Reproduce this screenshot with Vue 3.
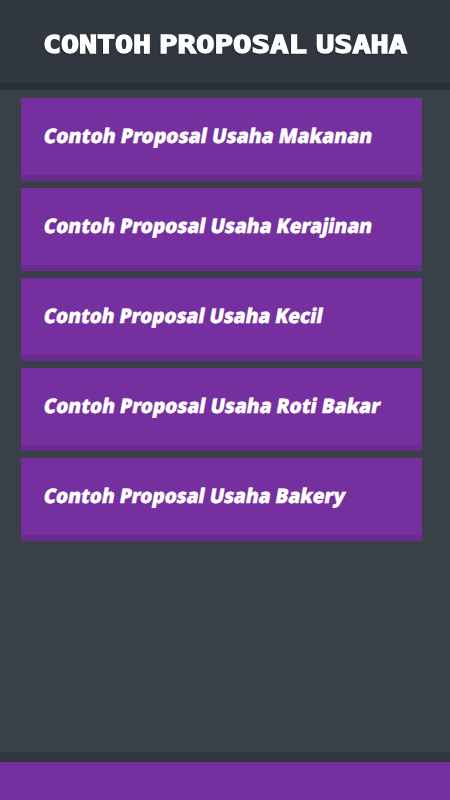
<template>
    <div class="screen">
        <header class="header">
            <svg class="title" width="450" height="83" viewBox="0 0 450 83">
                <text v-for="word in titleWords" :key="word.text" :x="word.x" y="53" :textLength="word.width"
                    lengthAdjust="spacingAndGlyphs">{{ word.text }}</text>
            </svg>
        </header>
        <main class="list">
            <div v-for="item in items" :key="item.text" class="card">
                <svg class="label" width="360" height="32" viewBox="0 0 360 32">
                    <text x="0" y="21.5" transform="translate(3.5 0) skewX(-10)" :textLength="item.width"
                        lengthAdjust="spacingAndGlyphs">{{ item.text }}</text>
                </svg>
            </div>
        </main>
        <footer class="footer"></footer>
    </div>
</template>

<script setup>
const titleWords = [
    { text: "CONTOH", x: 43, width: 108 },
    { text: "PROPOSAL", x: 159, width: 148 },
    { text: "USAHA", x: 316, width: 91 },
];

const items = [
    { text: "Contoh Proposal Usaha Makanan", width: 328.5 },
    { text: "Contoh Proposal Usaha Kerajinan", width: 328.5 },
    { text: "Contoh Proposal Usaha Kecil", width: 279 },
    { text: "Contoh Proposal Usaha Roti Bakar", width: 336.5 },
    { text: "Contoh Proposal Usaha Bakery", width: 301.5 },
];
</script>

<style>
body {
    margin: 0;
    background: #394047;
}
</style>

<style scoped>
.screen {
    display: flex;
    flex-direction: column;
    width: 450px;
    height: 800px;
    background: #394047;
    overflow: hidden;
}

.header {
    box-sizing: border-box;
    height: 90px;
    background: #31373f;
    border-bottom: 7px solid #2a3038;
}

.title {
    display: block;
    font-family: "DejaVu Sans Mono", monospace;
    font-size: 24px;
    font-weight: 700;
    fill: #fff;
    stroke: #fff;
    stroke-width: 1.3px;
    stroke-linejoin: miter;
    filter: drop-shadow(-1px 1px 0 #1e2831);
}

.list {
    display: flex;
    flex: 1;
    flex-direction: column;
    gap: 7px;
    padding: 8px 28px 0 21px;
}

.card {
    box-sizing: border-box;
    height: 83px;
    padding: 23px 0 0 22px;
    background: #762f9f;
    border-bottom: 6px solid #6a2b8f;
}

.label {
    display: block;
    overflow: visible;
    fill: #fff;
    stroke: #fff;
    stroke-width: 0.4px;
    font-family: "Noto Sans", sans-serif;
    font-size: 20px;
    font-weight: 900;
}

.footer {
    box-sizing: border-box;
    height: 48px;
    background: #762f9f;
    border-top: 10px solid #31373f;
}
</style>
